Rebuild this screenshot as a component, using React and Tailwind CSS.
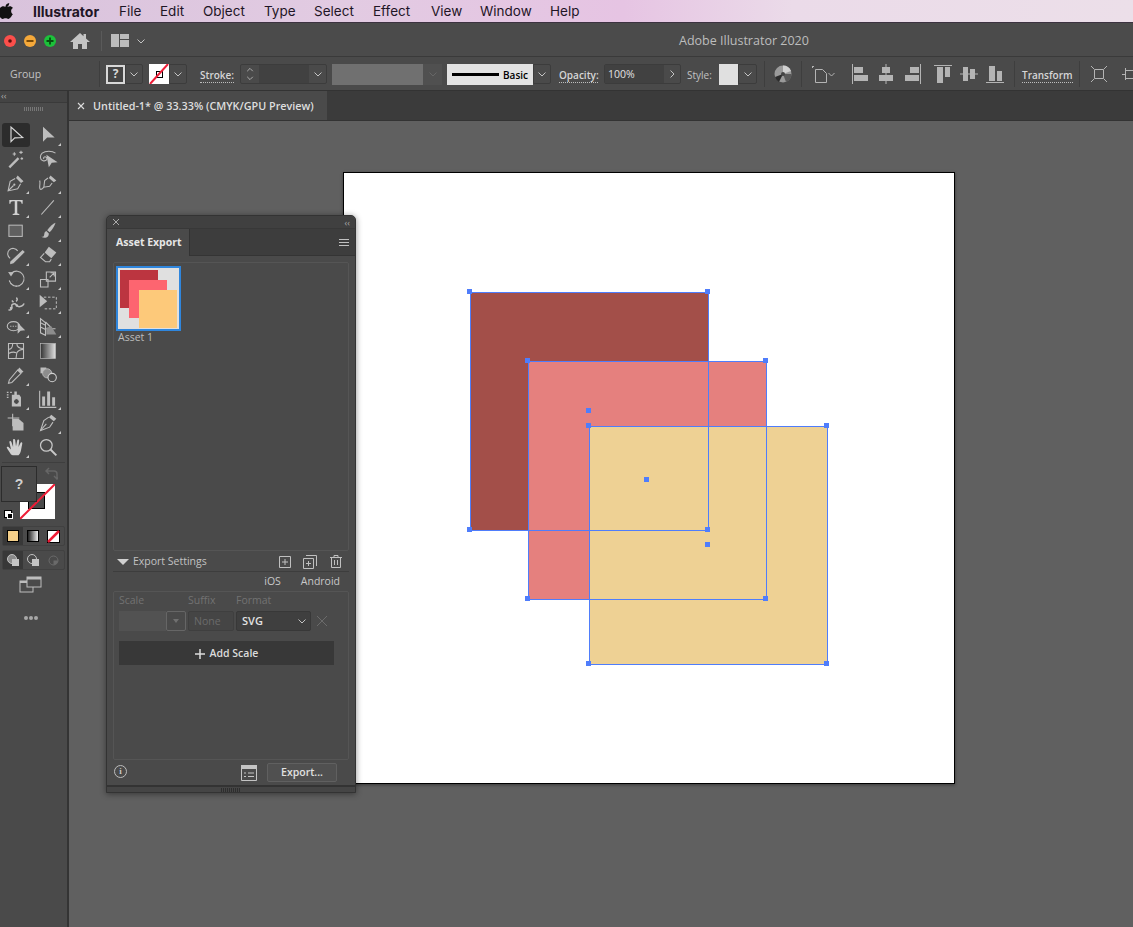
import React from 'react';

const ui = 'font-["Open_Sans","Liberation_Sans",sans-serif]';

function Chevron({ className = '', dir = 'down' }) {
  return (
    <svg width="10" height="10" viewBox="0 0 10 10" className={className} fill="none" stroke="#c4c4c4" strokeWidth="1">
      {dir === 'down' && <path d="M1.5 3.5 5 7l3.5-3.5" />}
      {dir === 'up' && <path d="M1.5 6.5 5 3l3.5 3.5" />}
      {dir === 'right' && <path d="M3.5 1.5 7 5 3.5 8.5" />}
    </svg>
  );
}

function ChevBox({ w = 'w-[18px]', dir = 'down' }) {
  return <div className={`${w} h-[20px] flex items-center justify-center border border-[#3c3c3c] rounded-r-[2px]`}><Chevron dir={dir} /></div>;
}

function Sep({ className = '' }) {
  return <div className={`w-px h-[26px] bg-[#3e3e3e] ${className}`} />;
}

function Dotted({ children, className = '' }) {
  return <span className={`mt-[3px] text-[10px] leading-[13px] font-semibold text-[#d6d6d6] border-b border-dotted border-[#bdbdbd] ${className}`}>{children}</span>;
}

function AlignIcon({ d, line }) {
  return (
    <svg width="18" height="20" viewBox="0 0 18 20" fill="#b4b4b4" stroke="none">
      <path d={d} />
      <path d={line} stroke="#b4b4b4" strokeWidth="1" fill="none" />
    </svg>
  );
}

function Lights() {
  return (
    <div className="flex gap-[8px] ml-[4px]">
      <svg width="12" height="12" viewBox="0 0 12 12"><circle cx="6" cy="6" r="6" fill="#fc4f4b" /><circle cx="6" cy="6" r="1.8" fill="#5c0f0c" /></svg>
      <svg width="12" height="12" viewBox="0 0 12 12"><circle cx="6" cy="6" r="6" fill="#f6a93a" /><rect x="2.5" y="5" width="7" height="2" fill="#7a4a06" /></svg>
      <svg width="12" height="12" viewBox="0 0 12 12"><circle cx="6" cy="6" r="6" fill="#1cc13a" /><path d="M2.5 6h7M6 2.5v7" stroke="#06500f" strokeWidth="1.8" /></svg>
    </div>
  );
}

function MenuBar() {
  const items = [
    ['File', 'w-[41px]'], ['Edit', 'w-[43px]'], ['Object', 'w-[61px]'], ['Type', 'w-[50px]'],
    ['Select', 'w-[59px]'], ['Effect', 'w-[58px]'], ['View', 'w-[49px]'], ['Window', 'w-[70px]'], ['Help', 'w-[40px]'],
  ];
  return (
    <div className='h-[23px] flex items-center bg-[linear-gradient(90deg,#d9c3dc_0%,#e2cbe2_30%,#e6c4e3_55%,#ebdbe9_70%,#ecdfe9_100%)] border-b border-[#3c3240] font-["Inter","Liberation_Sans",sans-serif] text-[13.5px] text-[#1f1526]'>
      <svg width="14" height="16" viewBox="0 0 14 16" className="ml-[-1px]" fill="#111">
        <path d="M10.2 0c.1 1.200-.3 2.300-1 3.100-.7.800-1.700 1.300-2.700 1.200-.1-1.100.4-2.300 1-3C8.200.6 9.300.1 10.200 0zM13.400 11.500c-.4.900-.6 1.300-1.100 2.100-.7 1.100-1.700 2.300-2.900 2.300-1.100 0-1.400-.7-2.800-.7-1.500 0-1.800.7-2.900.7-1.200 0-2.200-1.100-2.900-2.200C-.2 10.700-.5 7 .8 5.200 1.700 3.900 3.100 3.200 4.400 3.200c1.300 0 2.200.8 3.200.8 1 0 1.600-.8 3.200-.8 1.100 0 2.300.6 3.200 1.700-2.800 1.500-2.300 5.500.4 6.600z" />
      </svg>
      <span className="font-bold text-[14px] ml-[20px] w-[86px]">Illustrator</span>
      {items.map(([t, w]) => <span key={t} className={w}>{t}</span>)}
    </div>
  );
}

function TitleBar() {
  return (
    <div className="relative h-[34px] pt-[2px] flex items-center bg-[#4b4b4b] border-b border-[#3a3a3a]">
      <Lights />
      <svg width="20" height="18" viewBox="0 0 20 18" className="ml-[14px]" fill="#c4c4c4"><path d="M10 1 0 10h3v7h5v-5h4v5h5v-7h3l-4-3.600V2h-2.500v2.300z" /></svg>
      <div className="w-px h-[20px] bg-[#5a5a5a] ml-[11px]" />
      <svg width="18" height="13" viewBox="0 0 18 13" className="ml-[9px]" fill="#bcbcbc"><path d="M0 0h8v13H0zM9 0h9v5H9zM9 6h9v7H9z" /></svg>
      <Chevron className="ml-[7px]" />
      <span className={`absolute left-[679px] top-[9px] text-[12.5px] leading-[18px] text-[#bdbdbd] ${ui}`}>Adobe Illustrator 2020</span>
    </div>
  );
}

function ControlBar() {
  return (
    <div className={`h-[34px] pt-px flex items-center bg-[#4a4a4a] border-b border-[#333] overflow-hidden [&>*]:shrink-0 ${ui}`}>
      <div className="ml-[10px] mt-[2px] w-[89px] text-[10.5px] text-[#c2c2c2]">Group</div>
      <Sep />
      <div className="ml-[6px] w-[19px] h-[19px] border-2 border-[#d8d8d8] bg-[#444] flex items-center justify-center text-[12px] font-bold text-[#d8d8d8]">?</div>
      <ChevBox />
      <div className="ml-[6px] w-[20px] h-[20px] bg-white relative overflow-hidden flex items-center justify-center">
        <div className="w-[7px] h-[7px] border border-black" />
        <svg width="20" height="20" viewBox="0 0 20 20" className="absolute inset-0"><path d="M1 20 19 0" stroke="#ee1c36" strokeWidth="2" /></svg>
      </div>
      <ChevBox />
      <Dotted className="ml-[13px] w-[34px]">Stroke:</Dotted>
      <div className="ml-[6px] w-[87px] h-[20px] flex border border-[#3c3c3c] rounded-[2px]">
        <div className="w-[18px] flex flex-col items-center justify-center"><Chevron dir="up" className="h-[8px]" /><Chevron className="h-[8px]" /></div>
        <div className="w-[50px] bg-[#414141]" />
        <div className="flex-1 flex items-center justify-center"><Chevron /></div>
      </div>
      <div className="ml-[5px] w-[91px] h-[21px] bg-[#707070]" />
      <div className="w-[19px] h-[21px] flex items-center justify-center bg-[#505050]"><svg width="10" height="10" viewBox="0 0 10 10" fill="none" stroke="#666"><path d="M1.500 3.500 5 7l3.500-3.500" /></svg></div>
      <div className="ml-[5px] w-[86px] h-[21px] bg-[#e2e2e2] flex items-center">
        <div className="ml-[5px] w-[47px] h-[3px] bg-black" />
        <span className="ml-[4px] mt-[2px] text-[10px] font-semibold text-black">Basic</span>
      </div>
      <ChevBox />
      <Dotted className="ml-[8px] w-[39px]">Opacity:</Dotted>
      <div className="ml-[6px] w-[77px] h-[20px] flex border border-[#3c3c3c] rounded-[2px]">
        <div className="w-[59px] bg-[#414141] pl-[3px] text-[10.5px] leading-[18px] text-[#e2e2e2]">100%</div>
        <div className="flex-1 flex items-center justify-center"><Chevron dir="right" /></div>
      </div>
      <span className="ml-[6px] mt-[2px] w-[32px] text-[10px] text-[#c2c2c2]">Style:</span>
      <div className="w-[19px] h-[21px] bg-[#e0e0e0]" />
      <ChevBox w="w-[19px]" />
      <Sep className="ml-[7px]" />
      <svg width="18" height="18" viewBox="0 0 18 18" className="ml-[9px]">
        <circle cx="9" cy="9" r="8.500" fill="#9a9a9a" />
        <path d="M9 9 9 .5A8.500 8.500 0 0 1 17 6z" fill="#d0d0d0" />
        <path d="M9 9 17.500 9A8.500 8.500 0 0 1 12 17z" fill="#5a5a5a" />
        <path d="M9 9 5 17A8.500 8.500 0 0 1 1 12z" fill="#2c2c2c" />
        <circle cx="9" cy="9" r="2" fill="#444" />
      </svg>
      <Sep className="ml-[9px]" />
      <svg width="26" height="20" viewBox="0 0 26 20" className="ml-[8px]" fill="none" stroke="#b4b4b4">
        <path d="M5.500 5.500h7l4 4v9h-11zM2 2.500h2M2.500 2v2" />
        <path d="M18.500 9 21.500 12 24.500 9" />
      </svg>
      <div className="ml-[15px] flex gap-[8px]">
        <AlignIcon d="M3 3h9v6H3zM3 11h14v6H3z" line="M1.500 0v20" />
        <AlignIcon d="M5 3h8v6H5zM2 11h14v6H2z" line="M9 0v20" />
        <AlignIcon d="M7 3h9v6H7zM2 11h14v6H2z" line="M17.500 0v20" />
      </div>
      <div className="ml-[13px] flex gap-[8px]">
        <AlignIcon d="M3 3h6v16H3zM11 3h5v10h-5z" line="M0 1.500h18" />
        <AlignIcon d="M3 3h5v14H3zM10 5h5v10h-5z" line="M0 10h18" />
        <AlignIcon d="M3 2h6v15H3zM11 7h5v10h-5z" line="M0 18.500h18" />
      </div>
      <Sep className="ml-[10px]" />
      <Dotted className="ml-[7px] w-[51px]">Transform</Dotted>
      <Sep className="ml-[6px]" />
      <svg width="18" height="18" viewBox="0 0 18 18" className="ml-[10px]" fill="none" stroke="#b4b4b4"><path d="M4.500 4.500h9v9h-9zM1 1l3 3M17 1l-3 3M1 17l3-3M17 17l-3-3" /></svg>
      <svg width="14" height="18" viewBox="0 0 14 18" className="ml-[14px]" fill="none" stroke="#b4b4b4"><path d="M3.500 5.500h8v8h-8zM3.500 3v12M0 9.500h3" /></svg>
    </div>
  );
}

const s = { fill: 'none', stroke: '#bdbdbd', strokeWidth: 1.3 };
const f = { fill: '#bdbdbd' };

const tools = [
  { active: true, g: <path d="M6 2.500V20l4.500-4.500 9.500-.5z" fill="none" stroke="#d8d8d8" strokeWidth="1.400" /> },
  { c: 1, g: <path d="M6 2v18l5-5h9z" {...f} /> },
  { g: <g><path d="M3 21 14 10l2 2L5 23z" {...f} /><path d="M10 4v4M8 6h4M18 2v4M16 4h4M19 10v3M17.500 11.500h3" {...s} /></g> },
  { g: <g><path d="M21 5c-4-3-12-3-16 0-3 3-3 8 1 9 4 1 6-2 4-4-2-1.500-4 0-3 2" {...s} /><path d="M10 7l3 15 3.500-5.500 7-.5z" {...f} /></g> },
  { c: 1, g: <g><path d="M14 3l7 7-3 2-6-6z" {...f} /><path d="M11 6.500 5 10 2.500 21.500 14 19l3.500-6" {...s} /><path d="M3 21l6-6" {...s} /><circle cx="10" cy="14" r="1.300" {...f} /></g> },
  { c: 1, g: <g><path d="M15 3l7 6-3 2-6-5z" {...f} /><path d="M12 6 8 9l-1 8 7-1 3-4" {...s} /><path d="M7 17c-3 4-5 3-5 0s1-5 0-8" {...s} /></g> },
  { c: 1, g: <path d="M4 3.500h16V8h-1.300c-.3-2-1-2.800-3-2.800h-2.200V19c0 1 .5 1.300 2.500 1.300v1.200H8v-1.200c2 0 2.500-.3 2.500-1.300V5.200H8.300c-2 0-2.700.8-3 2.800H4z" fill="#d0d0d0" /> },
  { c: 1, g: <path d="M4 21 19 4" {...s} /> },
  { c: 0, g: <rect x="3.500" y="5" width="16" height="13.500" fill="#606060" stroke="#bdbdbd" strokeWidth="1.200" /> },
  { c: 1, g: <g><path d="M21 2c-3 1-7 5-10 9l3 2.500c3-3 6-8 7-11.500z" {...f} /><path d="M10 12c-3 1-2 4-3 6-.5 1-2 1-3 1 3 2 9 2 9-4z" {...f} /></g> },
  { c: 1, g: <g><path d="M14 7a6.500 6.500 0 1 0-9 9" {...s} /><path d="M5 20 20 6l2.500 2.500L9 22l-4 1z" {...f} /></g> },
  { c: 1, g: <g><path d="M13 2l9 7-6 7-8-7z" {...f} /><path d="M7.500 10 3 15l6 5h5l2-3" {...s} /></g> },
  { c: 1, g: <g><path d="M6.500 5A9 9 0 1 1 4 14" {...s} /><path d="M4 14a9 9 0 0 0 12 6" fill="none" stroke="#bdbdbd" strokeWidth="1.300" strokeDasharray="1.500 2" /><path d="M2.500 3.500l7 .5-3.500 5z" {...f} /></g> },
  { c: 1, g: <g><path d="M10 3.500h11v11H10zM3 12.500h9v9H3z" {...s} /><path d="M14 10l5-5M15 4.500h4.500V9" {...s} /></g> },
  { c: 1, g: <g><path d="M3 20c3 1 5-1 4-4s4-4 5-2 3 3 6 2 3-3 4-3M7 9l2 2M12 6c2 0 2 3 0 4" fill="none" stroke="#bdbdbd" strokeWidth="1.800" /><circle cx="6" cy="18" r="1.500" {...f} /><circle cx="13" cy="15" r="1.500" {...f} /></g> },
  { c: 1, g: <g><path d="M2 2v15l9-7z" {...f} /><path d="M7 5h15v14H7" fill="none" stroke="#bdbdbd" strokeWidth="1.200" strokeDasharray="3 2" /></g> },
  { c: 1, g: <g><ellipse cx="9" cy="11" rx="7.500" ry="5.500" {...s} /><path d="M5 11h8" fill="none" stroke="#bdbdbd" strokeWidth="1.300" strokeDasharray="1.500 1.500" /><path d="M14 7v13l3.500-3.500 5.500-.5z" {...f} /></g> },
  { c: 1, g: <g><path d="M3 2v17l6 3V7zM3 7l6 3M3 12l6 3M9 6l6 6M9 14h12" {...s} /><path d="M10 21v-8l6-2 6 10z" fill="#8d8d8d" /></g> },
  { g: <g><path d="M3 3h18v18H3z" {...s} /><path d="M3 10c4 0 5-3 5-7M21 10c-3 0-6 1-8 4l-1 7M12 14c-2-1-5-1-9 1M13 3c0 4 2 6 8 6" {...s} /></g> },
  { g: <rect x="3" y="3" width="18" height="18" className="fill-[url(#grad)]" stroke="#bdbdbd" strokeWidth="0.800" /> },
  { c: 1, g: <g><path d="M16 3l5 5-3 2-4-4z" {...f} /><path d="M14 6l4 4L7 21l-4 1 1-4z" {...s} /></g> },
  { g: <g><path d="M3 3h7v7H3z" {...f} /><circle cx="11" cy="10" r="5.500" fill="#8d8d8d" stroke="#bdbdbd" /><circle cx="17" cy="15" r="5" fill="#4a4a4a" stroke="#d0d0d0" strokeWidth="1.300" /></g> },
  { c: 1, g: <g><path d="M10 3h3v4h-3zM7 7h9l2 3v11H7z" {...f} /><circle cx="12.500" cy="15" r="3.500" fill="#4a4a4a" stroke="#d0d0d0" strokeWidth="1.200" /><path d="M1 4h2M5 4h2M1 7h2M1 10h2" stroke="#bdbdbd" strokeWidth="1.600" /></g> },
  { c: 1, g: <g><path d="M5 9h3.500v11H5zM11 3h3.500v17H11zM17 10h3.500v10H17z" {...f} /><path d="M2 2v20h20" {...s} /></g> },
  { g: <g><path d="M2 6h14M8 1v15" {...s} /><path d="M8 7h7l6 5v9H8z" {...f} /></g> },
  { c: 1, g: <g><path d="M16 2l6 5-3 3-6-5z" {...f} /><path d="M13 5 7 9 3 21l11-4 4-6" {...s} /><path d="M3 21l7-8" {...s} /></g> },
  { c: 1, g: <path d="M6 21c-2-3-4-6-5-8-.5-1 1-2 2-1l3 3-2-9c0-1.500 2-1.500 2.500 0l2 6V3.500c0-1.500 2.300-1.500 2.500 0L12 11l1.500-7c.3-1.500 2.500-1 2.300.5L15 12l2.500-5c.7-1.300 2.500-.5 2 1L18 16c-.5 3-2 5-3 6H8z" fill="#d0d0d0" /> },
  { g: <g><circle cx="10" cy="10" r="7" fill="none" stroke="#c8c8c8" strokeWidth="1.500" /><path d="M15 15l7 7" stroke="#c8c8c8" strokeWidth="2.400" /></g> },
];

function ToolIcon({ tool }) {
  return (
    <div className={`relative h-[24px] flex items-center justify-center ${tool.active ? 'bg-[#2c2c2c] rounded-[3px] w-[28px] ml-[2px] mr-px' : 'w-[31px]'}`}>
      <svg width="20" height="20" viewBox="0 0 24 24">
        <defs><linearGradient id="grad"><stop offset="0" stopColor="#333" /><stop offset="1" stopColor="#e0e0e0" /></linearGradient></defs>
        {tool.g}
      </svg>
      {tool.c === 1 && <div className="absolute right-[2px] bottom-[1px] w-0 h-0 border-l-[3px] border-l-transparent border-b-[3px] border-b-[#c8c8c8]" />}
    </div>
  );
}

function Toolbar() {
  return (
    <div className="w-[69px] shrink-0 bg-[#4a4a4a] border-r-2 border-[#343434] flex flex-col">
      <div className="h-[12px] bg-[#444] border-b border-[#3a3a3a] text-[#aaa] text-[9px] leading-[9px] pl-[1px]">‹‹</div>
      <div className="h-[11px] flex justify-center items-center"><div className="w-[20px] h-[4px] bg-[repeating-linear-gradient(90deg,#777_0_1px,transparent_1px_2px)]" /></div>
      <div className="grid grid-cols-[32px_31px] mt-[9px]">
        {tools.map((t, i) => <ToolIcon key={i} tool={t} />)}
      </div>
      <div className="h-px bg-[#3e3e3e] mx-[2px] mt-[3px]" />
      {/* fill and stroke widget */}
      <div className="relative h-[54px] mt-[3px]">
        <div className="absolute left-[20px] top-[18px] w-[35px] h-[35px] bg-white overflow-hidden">
          <div className="absolute left-[8px] top-[8px] w-[17px] h-[17px] bg-[#4a4a4a] border border-black" />
          <svg width="35" height="35" viewBox="0 0 35 35" className="absolute inset-0"><path d="M0 35 35 0" stroke="#ee1c36" strokeWidth="2" /></svg>
        </div>
        <div className="absolute left-[1px] top-0 w-[36px] h-[36px] bg-[#4a4a4a] border border-[#2c2c2c] flex items-center justify-center text-[14px] font-bold text-[#d0d0d0] font-['Liberation_Sans',sans-serif]">?</div>
        <svg width="13" height="13" viewBox="0 0 13 13" className="absolute left-[45px] top-[1px]" fill="none" stroke="#666" strokeWidth="1.500"><path d="M1 4h8c2 0 3 1 3 3v5M4 1 1 4l3 3M9 9l3 3 3-3" /></svg>
        <div className="absolute left-[4px] top-[44px] w-[8px] h-[8px] bg-white border border-black" />
        <div className="absolute left-[7px] top-[47px] w-[6px] h-[6px] bg-black border border-white" />
      </div>
      <div className="mx-[2px] mt-[6px] h-[20px] flex border border-[#414141] rounded-[2px]">
        <div className="flex-1 flex items-center justify-center bg-[#383838]"><div className="w-[12px] h-[12px] bg-[#f4cf89] border border-black" /></div>
        <div className="flex-1 flex items-center justify-center"><div className="w-[12px] h-[12px] bg-[linear-gradient(90deg,#222,#eee)] border border-black" /></div>
        <div className="flex-1 flex items-center justify-center">
          <svg width="13" height="13" viewBox="0 0 13 13"><rect x=".5" y=".5" width="12" height="12" fill="#fff" stroke="#000" /><path d="M1 12 12 1" stroke="#ee1c36" strokeWidth="2.500" /></svg>
        </div>
      </div>
      <div className="mx-[2px] mt-[4px] h-[20px] flex border border-[#414141] rounded-[2px]">
        <div className="flex-1 flex items-center justify-center bg-[#383838]"><svg width="13" height="13" viewBox="0 0 13 13"><circle cx="5" cy="5" r="4.500" fill="#8a8a8a" stroke="#c4c4c4" /><rect x="5" y="5" width="7" height="7" fill="#c4c4c4" /></svg></div>
        <div className="flex-1 flex items-center justify-center"><svg width="13" height="13" viewBox="0 0 13 13"><circle cx="5" cy="5" r="4.500" fill="none" stroke="#c4c4c4" /><rect x="5" y="5" width="7" height="7" fill="#c4c4c4" /></svg></div>
        <div className="flex-1 flex items-center justify-center"><svg width="11" height="11" viewBox="0 0 11 11"><circle cx="5.500" cy="5.500" r="4.500" fill="none" stroke="#6a6a6a" /><path d="M5.500 5.500H10A4.500 4.500 0 0 1 5.500 10z" fill="#6a6a6a" /></svg></div>
      </div>
      <svg width="23" height="17" viewBox="0 0 23 17" className="ml-[19px] mt-[6px]"><rect x="1" y="5" width="13" height="11" fill="none" stroke="#bdbdbd" /><rect x="1" y="5" width="13" height="2" fill="#bdbdbd" /><rect x="8" y="1" width="14" height="10" fill="#4a4a4a" stroke="#bdbdbd" /><rect x="8" y="1" width="14" height="2.500" fill="#bdbdbd" /></svg>
      <div className="flex gap-[1.500px] ml-[24px] mt-[23px]">
        <div className="w-[3.500px] h-[3.500px] rounded-full bg-[#a8a8a8]" />
        <div className="w-[3.500px] h-[3.500px] rounded-full bg-[#a8a8a8]" />
        <div className="w-[3.500px] h-[3.500px] rounded-full bg-[#a8a8a8]" />
      </div>
    </div>
  );
}

const boxes = [
  { pos: 'left-[126px] top-[119px]', bg: 'bg-[#a34f49]' },
  { pos: 'left-[184px] top-[188px]', bg: 'bg-[#e5807e]' },
  { pos: 'left-[245px] top-[253px]', bg: 'bg-[#eed194]' },
];

function Shapes() {
  const handle = 'absolute w-[5px] h-[5px] bg-[#4f7dfb]';
  const corners = ['left-[-4px] top-[-4px]', 'right-[-2px] top-[-4px]', 'left-[-4px] bottom-[-2px]', 'right-[-2px] bottom-[-2px]'];
  return (
    <>
      {boxes.map((b) => <div key={b.pos} className={`absolute w-[239px] h-[239px] ${b.pos} ${b.bg}`} />)}
      {boxes.map((b) => (
        <div key={b.pos} className={`absolute w-[239px] h-[239px] border border-[#4f7dfb] ${b.pos}`}>
          {corners.map((p) => <div key={p} className={`${handle} ${p}`} />)}
        </div>
      ))}
      <div className={`${handle} left-[242px] top-[235px]`} />
      <div className={`${handle} left-[361px] top-[369px]`} />
      <div className={`${handle} left-[300px] top-[304px]`} />
    </>
  );
}

function AssetPanel() {
  return (
    <div className={`absolute left-[37px] top-[94px] w-[250px] h-[578px] bg-[#4a4a4a] rounded-t-[5px] border border-[#333] shadow-[0_1px_6px_rgba(0,0,0,0.45)] flex flex-col ${ui}`}>
      <div className="h-[13px] bg-[#404040] rounded-t-[5px] flex items-center justify-between px-[5px] border-b border-[#383838]">
        <svg width="8" height="8" viewBox="0 0 8 8" stroke="#aaa"><path d="M1 1l6 6M7 1 1 7" /></svg>
        <span className="text-[9px] leading-[9px] text-[#aaa]">‹‹</span>
      </div>
      <div className="h-[27px] flex bg-[#3d3d3d]">
        <div className="w-[83px] bg-[#4a4a4a] border-r border-[#333] flex items-center pl-[9px] text-[10.5px] font-bold text-[#e6e6e6]">Asset Export</div>
        <div className="flex-1 border-b border-[#343434] flex items-center justify-end pr-[6px]">
          <div className="flex flex-col gap-[2px]"><div className="w-[10px] h-px bg-[#c0c0c0]" /><div className="w-[10px] h-px bg-[#c0c0c0]" /><div className="w-[10px] h-px bg-[#c0c0c0]" /></div>
        </div>
      </div>
      <div className="mx-[6px] mt-[6px] h-[289px] border border-[#555] rounded-[2px] pl-[2px] pt-[3px]">
        <div className="relative w-[65px] h-[65px] border-2 border-[#2f86dd] bg-[#e0e0e0]">
          <div className="absolute left-[2px] top-[2px] w-[38px] h-[38px] bg-[#bc3540]" />
          <div className="absolute left-[11px] top-[12px] w-[38px] h-[38px] bg-[#fd6570]" />
          <div className="absolute left-[21px] top-[22px] w-[38px] h-[38px] bg-[#fdc97a]" />
        </div>
        <div className="ml-[2px] text-[10.5px] leading-[13px] text-[#bdbdbd]">Asset 1</div>
      </div>
      <div className="h-[21px] pt-px flex items-center mx-[6px] border-b border-[#3d3d3d]">
        <div className="ml-[4px] w-0 h-0 border-x-[6px] border-x-transparent border-t-[6px] border-t-[#d0d0d0]" />
        <span className="ml-[4px] w-[146px] text-[10.5px] text-[#c2c2c2]">Export Settings</span>
        <svg width="12" height="12" viewBox="0 0 12 12" fill="none" stroke="#c0c0c0"><path d="M.5.500h11v11H.5zM6 3v6M3 6h6" /></svg>
        <svg width="14" height="14" viewBox="0 0 14 14" fill="none" stroke="#c0c0c0" className="ml-[12px]"><path d="M.5 3.500h10v10H.5zM3 .5h10.500V11M5.500 6v5M3 8.500h5" /></svg>
        <svg width="12" height="13" viewBox="0 0 12 13" fill="none" stroke="#c0c0c0" className="ml-[13px]"><path d="M0 2.500h12M4 2.500V.5h4v2M1.500 2.500v10h9v-10M4.500 5v5M7.500 5v5" /></svg>
      </div>
      <div className="h-[19px] pt-px flex items-center justify-end text-[10.5px] text-[#c8c8c8] pr-[15px]">
        <span>iOS</span><span className="ml-[20px]">Android</span>
      </div>
      <div className="mx-[6px] h-[169px] border border-[#555] rounded-[2px] px-[5px]">
        <div className="flex h-[16px] pt-[2px] items-center text-[10.5px] text-[#727272]">
          <span className="w-[69px]">Scale</span><span className="w-[48px]">Suffix</span><span>Format</span>
        </div>
        <div className="flex h-[20px] mt-[3px] items-stretch">
          <div className="w-[47px] bg-[#525252]" />
          <div className="w-[20px] border border-[#666] rounded-[2px] flex items-center justify-center"><div className="w-0 h-0 border-x-[3.500px] border-x-transparent border-t-[4px] border-t-[#707070]" /></div>
          <div className="ml-[2px] w-[46px] bg-[#454545] border border-[#3f3f3f] rounded-[2px] pl-[5px] text-[10.5px] leading-[18px] text-[#6b6b6b]">None</div>
          <div className="ml-[2px] w-[75px] bg-[#3f3f3f] border border-[#383838] rounded-[2px] flex items-center justify-between pl-[5px] pr-[3px] text-[11px] font-semibold text-[#e2e2e2]">SVG<Chevron /></div>
          <svg width="12" height="12" viewBox="0 0 12 12" className="ml-[5px] self-center" stroke="#6b6b6b"><path d="M1 1l10 10M11 1 1 11" /></svg>
        </div>
        <div className="mt-[10px] w-[215px] h-[24px] pt-px bg-[#383838] flex items-center justify-center gap-[5px] text-[10.5px] font-semibold text-[#dcdcdc]">
          <svg width="10" height="10" viewBox="0 0 10 10" stroke="#dcdcdc" strokeWidth="1.500"><path d="M5 0v10M0 5h10" /></svg>
          Add Scale
        </div>
      </div>
      <div className="flex items-center h-[23px] pt-[2px] pl-[7px]">
        <div className="mb-[2px] w-[13px] h-[13px] rounded-full border border-[#bdbdbd] flex items-center justify-center text-[9px] font-bold text-[#c8c8c8] font-['Liberation_Serif',serif]">i</div>
        <svg width="16" height="16" viewBox="0 0 16 16" className="ml-[114px]" fill="none" stroke="#c4c4c4"><path d="M.5.500h15v15H.5z" /><path d="M0 0h16v4H0z" fill="#c4c4c4" stroke="none" /><path d="M3 8h2M7 8h6M3 11.500h2M7 11.500h6" /></svg>
        <div className="ml-[10px] w-[70px] h-[19px] bg-[#505050] border border-[#606060] rounded-[2px] text-center text-[10.5px] leading-[17px] font-semibold text-[#e0e0e0]">Export...</div>
      </div>
      <div className="mt-[2px] flex-1 border-t-2 border-[#333] bg-[#454545] flex items-center justify-center">
        <div className="w-[20px] h-[4px] bg-[repeating-linear-gradient(90deg,#2e2e2e_0_1px,transparent_1px_2px)]" />
      </div>
    </div>
  );
}

function Workspace() {
  return (
    <div className="flex-1 flex flex-col">
      <div className={`h-[30px] flex bg-[#3b3b3b] border-b border-[#333] ${ui}`}>
        <div className="w-[258px] bg-[#4a4a4a] flex items-center pl-[8px] pt-px text-[10.8px] font-semibold text-[#dedede]">
          <svg width="8" height="8" viewBox="0 0 8 8" stroke="#ddd" strokeWidth="1.100"><path d="M1 1l6 6M7 1 1 7" /></svg>
          <span className="ml-[8px]">Untitled-1* @ 33.33% (CMYK/GPU Preview)</span>
        </div>
      </div>
      <div className="relative flex-1 bg-[#606060] overflow-hidden">
        <div className="absolute left-[274px] top-[51px] w-[612px] h-[612px] bg-white border border-black shadow-[0_1px_3px_rgba(0,0,0,0.4)]">
          <Shapes />
        </div>
        <AssetPanel />
      </div>
    </div>
  );
}

export default function App() {
  return (
    <div className="w-[1133px] h-[927px] flex flex-col overflow-hidden bg-[#606060]">
      <MenuBar />
      <TitleBar />
      <ControlBar />
      <div className="flex-1 flex min-h-0">
        <Toolbar />
        <Workspace />
      </div>
    </div>
  );
}
